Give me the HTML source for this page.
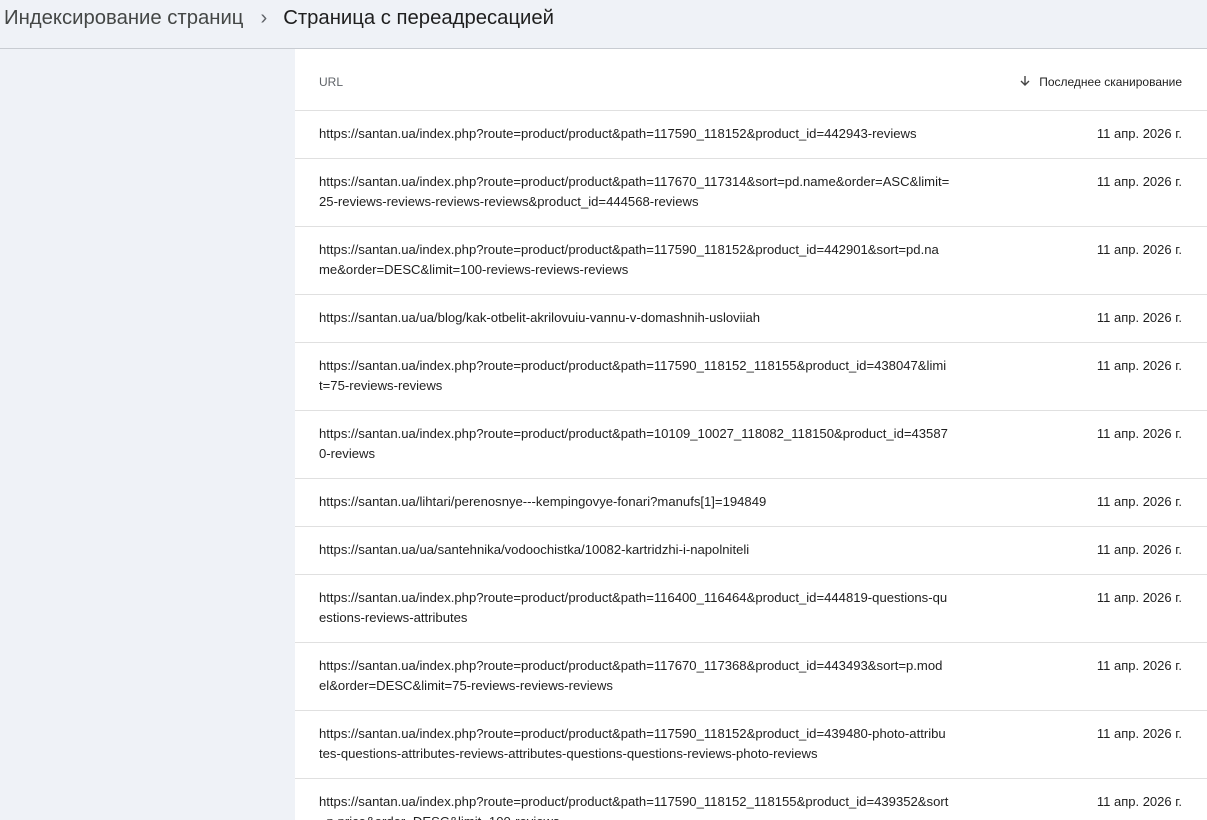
<!DOCTYPE html>
<html><head><meta charset="utf-8"><style>
*{margin:0;padding:0;box-sizing:border-box}
html,body{width:1207px;height:820px;overflow:hidden}
body{background:#eff2f7;font-family:"Liberation Sans",Arial,sans-serif;position:relative}
.top{position:absolute;left:0;top:0;width:1207px;height:49px;border-bottom:1px solid #c8ccd2;background:#eff2f7}
.bc{position:absolute;top:7px;left:4px;font-size:20.3px;color:#444746;white-space:nowrap}
.bc b{font-weight:normal;color:#1f1f1f}
.bc .sep{display:inline-block;margin:0 16px 0 17px;color:#5f6368}
.panel{position:absolute;left:295px;top:49px;width:912px;height:771px;overflow:hidden;background:#fff}
.hdr{height:62px;border-bottom:1px solid #e0e0e0;position:relative;font-size:12px;color:#5f6368}
.hdr .u{position:absolute;left:24px;top:26px}
.hdr .s{position:absolute;right:25px;top:26px;color:#1f1f1f}
.row{border-bottom:1px solid #e0e0e0;position:relative;font-size:13.1px;color:#1f1f1f;line-height:20px;padding:13px 0 14px 24px}
.row .d{position:absolute;right:25px;top:13px;font-size:13px}
</style></head><body>
<div class="top"><div class="bc">Индексирование страниц<span class="sep">›</span><b>Страница с переадресацией</b></div></div>
<div class="panel">
<div class="hdr"><span class="u">URL</span><span class="s"><svg width="12" height="12" viewBox="0 0 12 12" style="vertical-align:-1px;margin-right:8px"><path d="M6 1v9M2 6l4 4 4-4" stroke="#444" stroke-width="1.4" fill="none"/></svg>Последнее сканирование</span></div>
<div class="row">https://santan.ua/index.php?route=product/product&amp;path=117590_118152&amp;product_id=442943-reviews<span class="d">11 апр. 2026 г.</span></div>
<div class="row">https://santan.ua/index.php?route=product/product&amp;path=117670_117314&amp;sort=pd.name&amp;order=ASC&amp;limit=<br>25-reviews-reviews-reviews-reviews&amp;product_id=444568-reviews<span class="d">11 апр. 2026 г.</span></div>
<div class="row">https://santan.ua/index.php?route=product/product&amp;path=117590_118152&amp;product_id=442901&amp;sort=pd.na<br>me&amp;order=DESC&amp;limit=100-reviews-reviews-reviews<span class="d">11 апр. 2026 г.</span></div>
<div class="row">https://santan.ua/ua/blog/kak-otbelit-akrilovuiu-vannu-v-domashnih-usloviiah<span class="d">11 апр. 2026 г.</span></div>
<div class="row">https://santan.ua/index.php?route=product/product&amp;path=117590_118152_118155&amp;product_id=438047&amp;limi<br>t=75-reviews-reviews<span class="d">11 апр. 2026 г.</span></div>
<div class="row">https://santan.ua/index.php?route=product/product&amp;path=10109_10027_118082_118150&amp;product_id=43587<br>0-reviews<span class="d">11 апр. 2026 г.</span></div>
<div class="row">https://santan.ua/lihtari/perenosnye---kempingovye-fonari?manufs[1]=194849<span class="d">11 апр. 2026 г.</span></div>
<div class="row">https://santan.ua/ua/santehnika/vodoochistka/10082-kartridzhi-i-napolniteli<span class="d">11 апр. 2026 г.</span></div>
<div class="row">https://santan.ua/index.php?route=product/product&amp;path=116400_116464&amp;product_id=444819-questions-qu<br>estions-reviews-attributes<span class="d">11 апр. 2026 г.</span></div>
<div class="row">https://santan.ua/index.php?route=product/product&amp;path=117670_117368&amp;product_id=443493&amp;sort=p.mod<br>el&amp;order=DESC&amp;limit=75-reviews-reviews-reviews<span class="d">11 апр. 2026 г.</span></div>
<div class="row">https://santan.ua/index.php?route=product/product&amp;path=117590_118152&amp;product_id=439480-photo-attribu<br>tes-questions-attributes-reviews-attributes-questions-questions-reviews-photo-reviews<span class="d">11 апр. 2026 г.</span></div>
<div class="row">https://santan.ua/index.php?route=product/product&amp;path=117590_118152_118155&amp;product_id=439352&amp;sort<br>=p.price&amp;order=DESC&amp;limit=100-reviews<span class="d">11 апр. 2026 г.</span></div>
</div>
</body></html>
